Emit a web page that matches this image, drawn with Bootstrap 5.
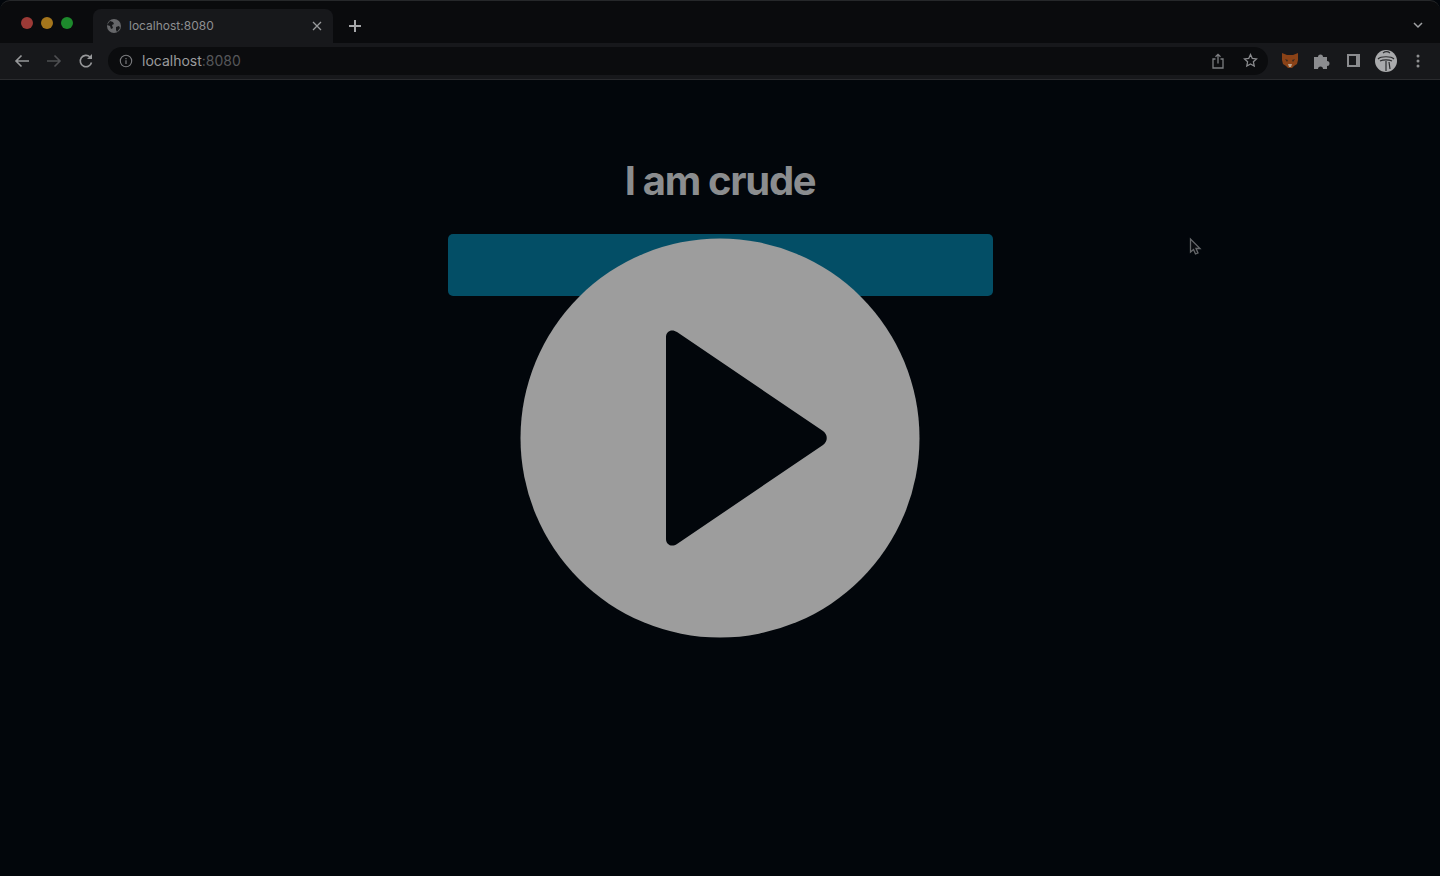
<!DOCTYPE html>
<html lang="en">
<head>
<meta charset="utf-8">
<title>I am crude</title>
<link href="https://cdn.jsdelivr.net/npm/bootstrap@5.3.0/dist/css/bootstrap.min.css" rel="stylesheet">
<style>
html,body{height:100%;margin:0;background:#02060b;overflow:hidden;}
.shell{height:876px;position:relative;background:#02060b;font-family:Inter,"Liberation Sans",sans-serif;}
.tabstrip{height:43px;background:#0a0b0d;border-top:1px solid #26282a;border-radius:10px 10px 0 0;padding-top:8px;}
.lights{width:93px;padding-left:21px;gap:8px;padding-bottom:14px;}
.light{width:12px;height:12px;border-radius:50%;}
.lr{background:#9c3a36;}.ly{background:#a5761c;}.lg{background:#1d8a2c;}
.tabbox{width:240px;height:34px;background:#17181b;border-radius:8px 8px 0 0;padding:0 11px 0 13px;color:#8e8f91;font-size:12px;}
.tabname{margin-left:7px;}
.plus{margin-left:15px;}
.chev{margin-right:17px;margin-bottom:14px;}
.toolbar{height:37px;background:#17181b;border-bottom:1px solid #2a2b2e;padding:0 0 1px 14px;}
.omni{width:1160px;height:28px;background:#0b0c0e;border-radius:14px;margin-left:14px;padding:0 10px 0 11px;font-size:14px;color:#9a9b9d;}
.omni .dim{color:#56575a;}
.host{margin-left:9px;}
.navgap{margin-right:16px;}
.omnitools{gap:18px;}
.tools{margin-left:14px;gap:16px;}
.avatar{margin-left:-2px;}
.dots{margin-left:3px;}
.stage{padding-top:79px;}
.headline{font-size:40px;font-weight:700;line-height:44px;color:#8b8d8f;letter-spacing:-1.3px;margin:0 0 31px;text-align:center;}
.bigbtn{display:block;width:545px;height:62px;background:#034e66;border:0;border-radius:5px;}
.bigbtn:hover,.bigbtn:focus{background:#034e66;}
.playover{position:absolute;left:520px;top:238px;width:400px;height:400px;}
.pointer{position:absolute;left:1188px;top:237px;width:14px;height:20px;}
</style>
</head>
<body>
<div class="shell">
  <div class="tabstrip d-flex align-items-end">
    <div class="lights d-flex align-items-center flex-shrink-0">
      <span class="light lr"></span><span class="light ly"></span><span class="light lg"></span>
    </div>
    <div class="tabbox d-flex align-items-center flex-shrink-0">
      <svg width="16" height="16" viewBox="0 0 16 16"><circle cx="8" cy="8" r="7" fill="#66676a"/><path d="M4 3l3 1 1 2-2 1 1 3-2 1-1-3-3-1zM10 9l3-1 1 2-3 4-1-2z" fill="#17181b"/></svg>
      <span class="tabname flex-grow-1">localhost:8080</span>
      <svg width="10" height="10" viewBox="0 0 10 10"><path d="M1 1l8 8M9 1l-8 8" stroke="#9a9b9d" stroke-width="1.3"/></svg>
    </div>
    <svg class="plus align-self-center" width="14" height="14" viewBox="0 0 14 14"><path d="M7 1v12M1 7h12" stroke="#a6a7a9" stroke-width="2"/></svg>
    <svg class="chev ms-auto" width="10" height="7" viewBox="0 0 10 7"><path d="M1 1l4 4 4-4" fill="none" stroke="#a0a1a3" stroke-width="1.5"/></svg>
  </div>
  <div class="toolbar d-flex align-items-center">
    <svg class="navgap" width="16" height="14" viewBox="0 0 16 14"><path d="M15 7H2M7.500 1.500L2 7l5.500 5.500" fill="none" stroke="#97989a" stroke-width="1.600"/></svg>
    <svg class="navgap" width="16" height="14" viewBox="0 0 16 14"><path d="M1 7h13M8.500 1.500L14 7l-5.500 5.500" fill="none" stroke="#4e4f52" stroke-width="1.600"/></svg>
    <svg width="16" height="16" viewBox="0 0 16 16"><path d="M13.500 9.500A5.700 5.700 0 1 1 12 4" fill="none" stroke="#97989a" stroke-width="1.600"/><path d="M14 1v5H9z" fill="#97989a"/></svg>
    <div class="omni d-flex align-items-center flex-shrink-0">
      <svg width="14" height="14" viewBox="0 0 14 14"><circle cx="7" cy="7" r="5.700" fill="none" stroke="#7a7b7e" stroke-width="1.100"/><path d="M7 6.300v3.700M7 4v1.300" stroke="#7a7b7e" stroke-width="1.200"/></svg>
      <span class="host">localhost<span class="dim">:8080</span></span>
      <span class="omnitools ms-auto d-flex align-items-center">
        <svg width="14" height="16" viewBox="0 0 14 16"><path d="M4.500 6H2v9h10V6H9.500M7 10.500V1.500M4.500 3.800L7 1.300l2.500 2.500" fill="none" stroke="#7c7d80" stroke-width="1.300"/></svg>
        <svg width="15" height="15" viewBox="0 0 15 15"><path d="M7.500 1.500l1.800 3.900 4.200.5-3.100 2.900.8 4.200-3.700-2.100-3.700 2.100.8-4.200L1.500 5.900l4.200-.5z" fill="none" stroke="#8a8b8e" stroke-width="1.300"/></svg>
      </span>
    </div>
    <div class="tools d-flex align-items-center">
      <svg width="16" height="15" viewBox="0 0 16 15"><path d="M0 0l5 2h6l5-2 0 7-1 4-3 2-2 2H6l-2-2-3-2-1-4z" fill="#8a4217"/><path d="M3 6l3 1-1 2zM13 6l-3 1 1 2z" fill="#3a2a1e"/><path d="M6 11h4l-1 3H7z" fill="#b9a48f"/></svg>
      <svg width="16" height="16" viewBox="0 0 16 16"><path d="M0 4h4a2.500 2.500 0 1 1 5 0h4v4a2.500 2.500 0 1 1 0 5v3H9a2.500 2.500 0 1 0-5 0H0z" fill="#8b8c8f"/></svg>
      <svg width="15" height="15" viewBox="0 0 15 15"><path d="M1 1h13v13H1zM3 3v9h7V3z" fill="#8b8c8f" fill-rule="evenodd"/></svg>
      <svg class="avatar" width="22" height="22" viewBox="0 0 22 22"><circle cx="11" cy="11" r="11" fill="#a9aaac"/><path d="M3 9c3-3 13-3 16 0M5 11c3-1.500 9-1.500 12 0M11 11v10M14 12l1 7M8 3c2-1.500 5-1.500 7 0" fill="none" stroke="#2c2d2f" stroke-width="1.200"/></svg>
      <svg class="dots" width="4" height="14" viewBox="0 0 4 14"><circle cx="2" cy="2" r="1.500" fill="#8f9092"/><circle cx="2" cy="7" r="1.500" fill="#8f9092"/><circle cx="2" cy="12" r="1.500" fill="#8f9092"/></svg>
    </div>
  </div>
  <main class="stage d-flex flex-column align-items-center">
    <h1 class="headline">I am crude</h1>
    <button type="button" class="btn bigbtn" aria-label="Action"></button>
  </main>
  <svg class="playover" viewBox="0 0 400 400" aria-hidden="true">
    <circle cx="200" cy="200" r="199.500" fill="#9d9d9d"/>
    <path d="M146 99C146 93 152 90.500 157 94L303 193C308 196.500 308 203.500 303 207L157 306C152 309.500 146 307 146 301z" fill="#02060b"/>
  </svg>
  <svg class="pointer" viewBox="0 0 14 20" aria-hidden="true"><path d="M2.500 2v13l3-2.500 2 4.500 2.500-1-2-4.500h4z" fill="#0a0c10" stroke="#66686b" stroke-width="1.300"/></svg>
</div>
<script src="https://cdn.jsdelivr.net/npm/bootstrap@5.3.0/dist/js/bootstrap.bundle.min.js"></script>
</body>
</html>
